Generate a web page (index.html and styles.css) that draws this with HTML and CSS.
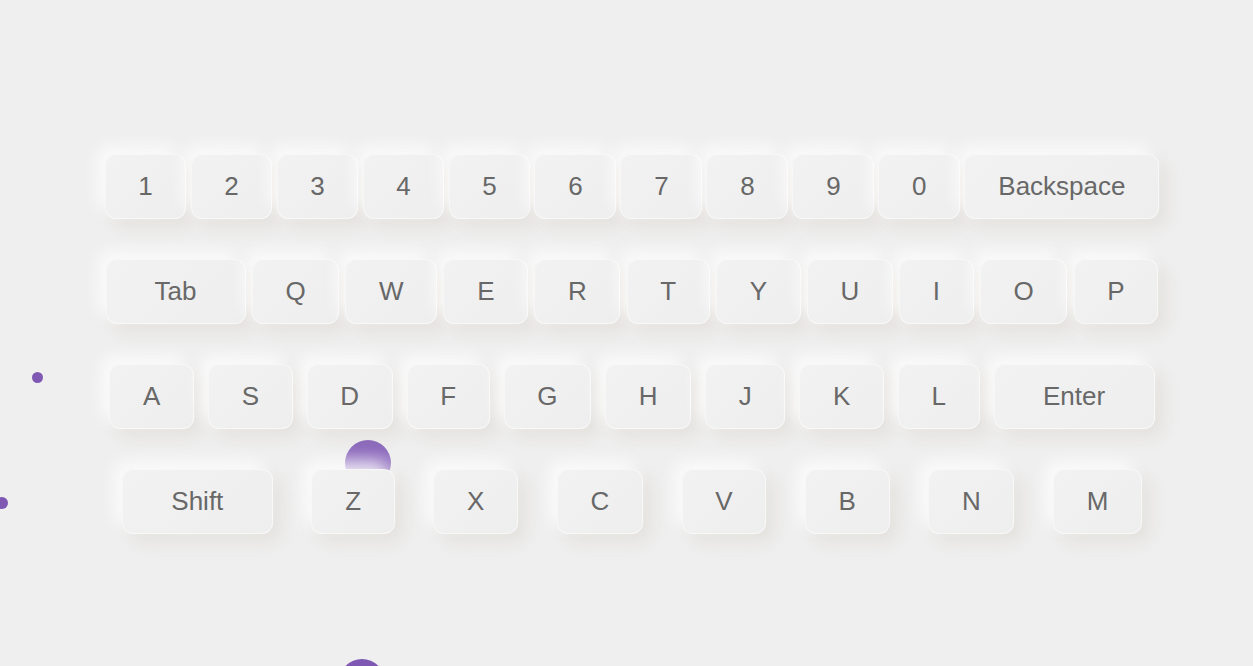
FILE: index.html
```html
<!DOCTYPE html>
<html>
<head>
<meta charset="utf-8">
<link rel="stylesheet" href="styles.css">
</head>
<body>
<div class="bubbles">
  <div class="bubble dot dot-a"></div>
  <div class="bubble dot dot-b"></div>
  <div class="bubble big big-a"></div>
  <div class="bubble big big-b"></div>
</div>
<div class="keyboard">
  <div class="row">
    <div class="key">1</div><div class="key">2</div><div class="key">3</div><div class="key">4</div><div class="key">5</div><div class="key">6</div><div class="key">7</div><div class="key">8</div><div class="key">9</div><div class="key">0</div><div class="key backspace">Backspace</div>
  </div>
  <div class="row">
    <div class="key tab">Tab</div><div class="key">Q</div><div class="key">W</div><div class="key">E</div><div class="key">R</div><div class="key">T</div><div class="key">Y</div><div class="key">U</div><div class="key">I</div><div class="key">O</div><div class="key">P</div>
  </div>
  <div class="row">
    <div class="key">A</div><div class="key">S</div><div class="key">D</div><div class="key">F</div><div class="key">G</div><div class="key">H</div><div class="key">J</div><div class="key">K</div><div class="key">L</div><div class="key enter">Enter</div>
  </div>
  <div class="row">
    <div class="key shift">Shift</div><div class="key">Z</div><div class="key">X</div><div class="key">C</div><div class="key">V</div><div class="key">B</div><div class="key">N</div><div class="key">M</div>
  </div>
</div>
</body>
</html>
```

FILE: styles.css
```css
html, body {
  margin: 0;
  padding: 0;
  overflow: hidden;
}
body {
  background: #efefef;
  font-family: "Liberation Sans", Arial, sans-serif;
  width: 1253px;
  height: 666px;
  position: relative;
}
.bubbles {
  position: absolute;
  left: 0;
  top: 0;
  width: 1253px;
  height: 666px;
  overflow: hidden;
}
.keyboard {
  width: 1059px;
  margin: 154px 0 0 102.5px;
  display: flex;
  flex-direction: column;
  gap: 40px;
}
.row {
  display: flex;
  justify-content: space-around;
}
.key {
  position: relative;
  box-sizing: border-box;
  height: 65px;
  padding: 0 32.7px;
  display: flex;
  align-items: center;
  justify-content: center;
  font-size: 26px;
  color: #686868;
  background: linear-gradient(135deg, #f2f2f2 0%, #eeeeee 100%);
  border-radius: 11px;
  border: 1px solid rgba(255, 255, 255, 0.5);
  box-shadow: -8px -8px 16px rgba(255, 255, 255, 0.75),
              8px 8px 16px rgba(212, 202, 192, 0.36);
  white-space: nowrap;
}
.backspace { width: 195px; }
.tab { width: 140px; }
.enter { width: 161px; }
.shift { width: 151px; }
.bubble {
  position: absolute;
  border-radius: 50%;
  background: #7f58b3;
}
.dot {
  width: 11px;
  height: 11px;
}
.dot-a { left: 32px; top: 372px; }
.dot-b { left: -4px; top: 497px; width: 12px; height: 12px; }
.big {
  width: 46px;
  height: 46px;
  background: linear-gradient(180deg, #845eb8 0%, #9c7ec6 50%, #b9a2d6 100%);
}
.big-a { left: 345px; top: 440px; }
.big-b { left: 339px; top: 659px; background: #7f58b3; }
```
